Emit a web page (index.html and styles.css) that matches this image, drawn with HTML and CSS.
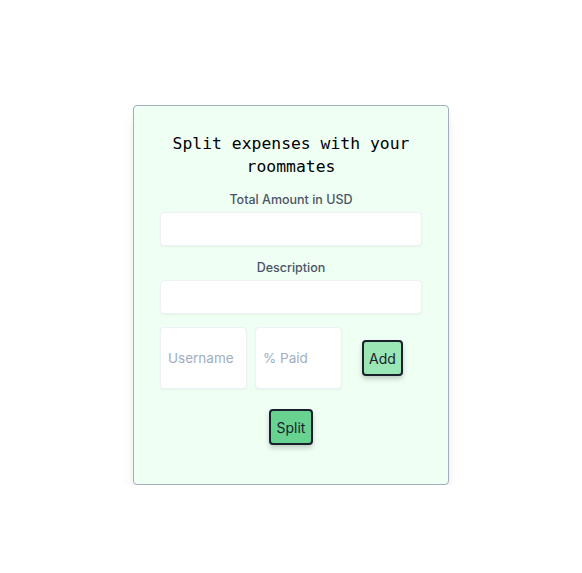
FILE: index.html
```html
<!DOCTYPE html>
<html>
<head>
<meta charset="utf-8">
<link rel="stylesheet" href="styles.css">
</head>
<body>
<div class="page">
  <div class="card">
    <h1 class="title">Split expenses with your roommates</h1>
    <label class="label">Total Amount in USD</label>
    <input class="field" type="text">
    <label class="label">Description</label>
    <input class="field last" type="text">
    <div class="row">
      <input class="field small" type="text" placeholder="Username">
      <input class="field small" type="text" placeholder="% Paid">
      <button class="btn add">Add</button>
    </div>
    <button class="btn split">Split</button>
  </div>
</div>
</body>
</html>
```
FILE: styles.css
```css
html, body { margin: 0; padding: 0; background: #ffffff; }
body { font-family: Inter, "Noto Sans", sans-serif; }
.page { display: flex; justify-content: center; padding-top: 105px; }
.card {
  width: 262px;
  padding: 26px 26px 39px;
  background: #f0fff4;
  border: 1px solid #a0aec0;
  border-radius: 4px;
  box-shadow: 0 10px 15px -3px rgba(0,0,0,0.1), 0 4px 6px -2px rgba(0,0,0,0.05);
  display: flex;
  flex-direction: column;
  align-items: center;
}
.title {
  margin: 0 0 14px;
  font-family: "DejaVu Sans Mono", monospace;
  font-weight: normal;
  font-size: 16.4px;
  line-height: 23px;
  text-align: center;
  color: #000;
  padding: 0 10px;
}
.label {
  font-family: Inter, sans-serif;
  font-size: 12.5px;
  font-weight: 500;
  color: #4a5568;
  line-height: 16px;
  margin-bottom: 4px;
}
.field {
  box-sizing: border-box;
  width: 262px;
  height: 34px;
  margin: 0 0 14px;
  border: 1px solid #edf2f7;
  border-radius: 4px;
  background: #fff;
  box-shadow: 0 1px 2px rgba(0,0,0,0.05);
  font-family: Inter, sans-serif;
  font-size: 13.5px;
  padding: 0 7px;
  outline: none;
}
.field.last { margin-bottom: 13px; }
.field::placeholder { color: #a0aec0; }
.row { display: flex; align-items: center; width: 262px; gap: 8px; margin-bottom: 20px; }
.field.small { width: 87px; height: 62px; margin: 0; }
.btn {
  box-sizing: border-box;
  border: 2px solid #1a202c;
  border-radius: 4px;
  font-family: Inter, sans-serif;
  font-size: 14px;
  color: #1a202c;
  height: 36px;
  padding: 0;
  box-shadow: 0 3px 5px rgba(0,0,0,0.2);
  cursor: pointer;
}
.add { background: #9ae6b4; margin-left: 12px; width: 41px; }
.split { background: #68d391; width: 44px; }
```
